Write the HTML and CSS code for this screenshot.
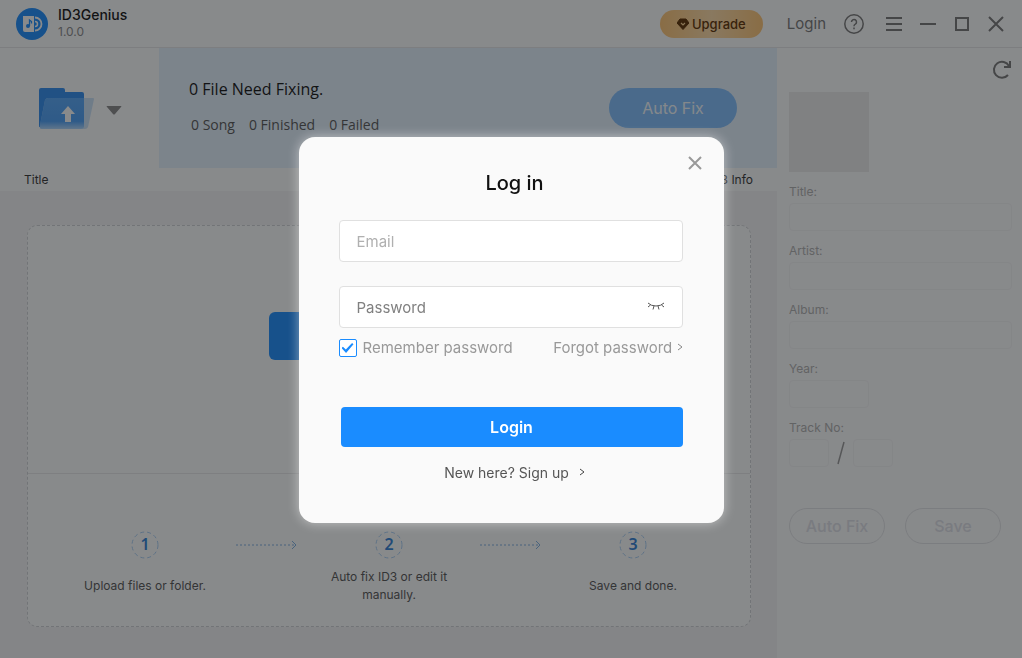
FILE: index.html
```html
<!DOCTYPE html>
<html lang="en">
	<head>
		<meta charset="utf-8">
		<title>ID3Genius</title>
		<link rel="stylesheet" href="styles.css">
	</head>
	<body>
		<div class="app">
			<header class="topbar">
				<svg class="logo" viewBox="0 0 32 32">
					<circle cx="16" cy="16" r="16" fill="#1a8cff"/>
					<path d="M7 8h11v16H9a2 2 0 0 1-2-2z" fill="#fff"/>
					<path d="M19 9.500a6.500 6.500 0 0 1 0 13" fill="none" stroke="#fff" stroke-width="1.800"/>
					<path d="M19 13.500a2.500 2.500 0 0 1 0 5" fill="none" stroke="#fff" stroke-width="1.500"/>
					<circle cx="12" cy="18" r="2" fill="#1a8cff"/>
					<path d="M13.500 18v-6l2 1.500v2" fill="none" stroke="#1a8cff" stroke-width="1.300"/>
				</svg>
				<div class="brand">
					<div class="name">ID3Genius</div>
					<div class="version">1.0.0</div>
				</div>
				<button class="upgrade" type="button">
					<svg width="12" height="12" viewBox="0 0 12 12"><path d="M3 1h6l3 4-6 6.500L0 5z" fill="#5c2f00" stroke="#5c2f00" stroke-linejoin="round"/><path d="M4 5l2 2 2-2" fill="none" stroke="#ffd593" stroke-width="1.200"/></svg>
					Upgrade
				</button>
				<a class="account" href="#">Login</a>
				<div class="tools">
					<button class="help" type="button" aria-label="Help"><svg width="20" height="20" viewBox="0 0 20 20"><circle cx="10" cy="10" r="9.200"/><path d="M7.500 8a2.500 2.500 0 1 1 3.800 2.100c-.9.500-1.300 1-1.300 2.100M10 13.600v1.600"/></svg></button>
					<button type="button" aria-label="Menu"><svg width="16" height="20" viewBox="0 0 16 20"><path d="M0 4h16M0 10h16M0 16h16"/></svg></button>
					<button type="button" aria-label="Minimize"><svg width="16" height="20" viewBox="0 0 16 20"><path d="M0 10h16"/></svg></button>
					<button type="button" aria-label="Maximize"><svg width="16" height="20" viewBox="0 0 16 20"><path d="M2 4h12v12H2z"/></svg></button>
					<button type="button" aria-label="Close"><svg width="16" height="20" viewBox="0 0 16 20"><path d="M1 3l14 14M15 3L1 17"/></svg></button>
				</div>
			</header>

			<div class="content">
				<main class="main">
					<div class="toolbar">
						<div class="add">
							<button type="button" aria-label="Add folder">
								<svg width="56" height="46" viewBox="0 0 56 46">
									<defs>
										<linearGradient id="front" x1="0" y1="0" x2="0" y2="1">
											<stop offset="0" stop-color="#56a8fb"/>
											<stop offset="0.750" stop-color="#4a9ff8"/>
											<stop offset="1" stop-color="#acd6ff"/>
										</linearGradient>
									</defs>
									<path d="M1 3q0-2 2-2h22q2 0 2 2v2h17q2 0 2 2v33H1z" fill="#2f8df0"/>
									<path d="M46 11h9q1 0 1 1l-6 28q-1 2-3 2H4q-3 0-2-4l5-25q1-2 3-2z" fill="#b4d6f7" opacity="0.700"/>
									<path d="M10 11h36v28q0 3-3 3H4q-3 0-2-4l5-25q1-2 3-2z" fill="url(#front)"/>
									<path d="M30 19l7 8h-4v8h-6v-8h-4z" fill="#fff"/>
								</svg>
							</button>
							<button type="button" aria-label="More"><svg width="16" height="9" viewBox="0 0 16 9"><path d="M1 0h14q1 0 0 1L9 8q-1 1-2 0L1 1q-1-1 0-1z" fill="#888"/></svg></button>
						</div>
						<div class="banner">
							<div class="summary">
								<div class="need">0 File Need Fixing.</div>
								<div class="counts"><span>0 Song</span><span>0 Finished</span><span>0 Failed</span></div>
							</div>
							<button class="autofix" type="button">Auto Fix</button>
						</div>
					</div>
					<div class="list-head"><span>Title</span><span>ID3 Info</span></div>
					<div class="drop">
						<div class="drop-top">
							<button class="pick" type="button" aria-label="Add files"></button>
						</div>
						<div class="steps">
							<div class="step"><svg width="30" height="30"><circle cx="15" cy="15" r="13"/><text x="15" y="20">1</text></svg><p>Upload files or folder.</p></div>
							<svg class="arrow" width="62" height="10" viewBox="0 0 62 10"><path class="dots" d="M0 5h58"/><path d="M56 1l4 4-4 4"/></svg>
							<div class="step"><svg width="30" height="30"><circle cx="15" cy="15" r="13"/><text x="15" y="20">2</text></svg><p>Auto fix ID3 or edit it manually.</p></div>
							<svg class="arrow" width="62" height="10" viewBox="0 0 62 10"><path class="dots" d="M0 5h58"/><path d="M56 1l4 4-4 4"/></svg>
							<div class="step"><svg width="30" height="30"><circle cx="15" cy="15" r="13"/><text x="15" y="20">3</text></svg><p>Save and done.</p></div>
						</div>
					</div>
				</main>

				<aside class="side">
					<button class="refresh" type="button" aria-label="Refresh"><svg width="20" height="20" viewBox="0 0 20 20"><path d="M16 15a8 8 0 1 1 1-9"/><path d="M18 1v6h-6"/></svg></button>
					<div class="cover"></div>
					<label for="title">Title:</label>
					<input id="title" type="text">
					<label for="artist">Artist:</label>
					<input id="artist" type="text">
					<label for="album">Album:</label>
					<input id="album" type="text">
					<label for="year">Year:</label>
					<input id="year" class="year" type="text">
					<label for="track">Track No:</label>
					<div class="track">
						<input id="track" type="text">
						<svg width="8" height="28" viewBox="0 0 8 28"><path d="M7 3L1 25" stroke="#999" stroke-width="1.500"/></svg>
						<input type="text" aria-label="Track total">
					</div>
					<div class="side-buttons">
						<button type="button">Auto Fix</button>
						<button type="button">Save</button>
					</div>
				</aside>
			</div>
		</div>

		<div class="mask">
			<form class="login" role="dialog" aria-labelledby="login-title">
				<button class="close" type="button" aria-label="Close"><svg width="14" height="14" viewBox="0 0 14 14"><path d="M1 1l12 12M13 1L1 13"/></svg></button>
				<h1 id="login-title">Log in</h1>
				<input class="field" type="email" placeholder="Email" aria-label="Email">
				<div class="password">
					<input class="field" type="password" placeholder="Password" aria-label="Password">
					<button class="eye" type="button" aria-label="Show password"><svg width="18" height="10" viewBox="0 0 18 10"><path d="M1 1q3 3 8 3t8-3M3.500 3L1 5M7 4L6 7.500M11 4l1 3.500M14.500 3L17 5"/></svg></button>
				</div>
				<div class="options">
					<label class="remember"><input type="checkbox" checked>Remember password</label>
					<a href="#">Forgot password <svg width="6" height="8" viewBox="0 0 6 8"><path d="M1 1l4 3-4 3"/></svg></a>
				</div>
				<button class="submit" type="submit">Login</button>
				<a class="signup" href="#">New here? Sign up <svg width="6" height="8" viewBox="0 0 6 8"><path d="M1 1l4 3-4 3"/></svg></a>
			</form>
		</div>
	</body>
</html>
```
FILE: styles.css
```css
* {
	box-sizing: border-box;
}

body {
	margin: 0;
	font-family: Inter, "Open Sans", sans-serif;
	font-size: 12px;
	color: #333;
}

button {
	font-family: inherit;
	border: 0;
	padding: 0;
	background: none;
	display: flex;
	align-items: center;
	justify-content: center;
}

input {
	font-family: inherit;
}

a {
	text-decoration: none;
}

.app {
	min-height: 100vh;
	display: flex;
	flex-direction: column;
	background: #fdfeff;
}

/* top bar */
.topbar {
	display: flex;
	align-items: center;
	height: 48px;
	padding: 0 18px 0 16px;
	border-bottom: 1px solid #e6e7e8;
}

.logo {
	width: 32px;
	height: 32px;
	margin-right: 10px;
}

.brand {
	flex: 1;
}

.name {
	font-size: 14px;
	line-height: 16px;
	font-weight: 500;
	color: #111;
}

.version {
	line-height: 18px;
	color: #888;
}

.upgrade {
	width: 103px;
	height: 28px;
	gap: 3px;
	border-radius: 14px;
	background: linear-gradient(90deg, #ffc473, #ffdca8 50%, #ffc473);
	color: #5c2f00;
	font-size: 13px;
	font-weight: 500;
}

.account {
	margin: 0 18px 0 24px;
	font-size: 15px;
	color: #777;
}

.tools {
	display: flex;
	gap: 18px;
}

.tools svg,
.refresh svg {
	fill: none;
	stroke: #777;
	stroke-width: 2;
}

.help {
	margin-right: 4px;
}

.tools .help svg {
	stroke-width: 1.5;
}

.content {
	flex: 1;
	display: flex;
}

.main {
	flex: 1;
	display: flex;
	flex-direction: column;
	background: #f4f5f6;
}

.toolbar {
	display: flex;
	height: 120px;
}

.add {
	display: flex;
	align-items: center;
	justify-content: center;
	gap: 12px;
	width: 159px;
	padding-top: 4px;
	background: #fdfeff;
}

.banner {
	flex: 1;
	display: flex;
	align-items: center;
	justify-content: space-between;
	padding: 0 40px 0 30px;
	background: #e5f2ff;
	font-family: "Open Sans", sans-serif;
}

.summary {
	padding-bottom: 2px;
}

.need {
	font-size: 16px;
	line-height: 24px;
	margin-bottom: 12px;
	color: #111;
}

.counts {
	display: flex;
	gap: 14px;
	padding-left: 2px;
	font-size: 14px;
	line-height: 24px;
	color: #555;
}

.autofix {
	width: 128px;
	height: 40px;
	border-radius: 20px;
	background: #80bfff;
	color: #f5faff;
	font-family: Inter, sans-serif;
	font-size: 16px;
}

.list-head {
	display: flex;
	justify-content: space-between;
	padding: 0 24px;
	line-height: 23px;
	background: #fdfeff;
}

.drop {
	flex: 1;
	display: flex;
	flex-direction: column;
	margin: 34px 26px 31px 27px;
	border: 1px dashed #d0d3d6;
	border-radius: 10px;
	background: #fdfeff;
}

.drop-top {
	flex: 1;
	display: flex;
	justify-content: center;
	align-items: center;
	padding-bottom: 28px;
	border-bottom: 1px solid #e8e9ea;
}

.pick {
	width: 240px;
	height: 48px;
	border-radius: 6px;
	background: #1a8cff;
}

.steps {
	display: flex;
	justify-content: space-between;
	padding: 56px 43px 22px;
}

.step {
	width: 148px;
	display: flex;
	flex-direction: column;
	align-items: center;
}

.step p {
	display: flex;
	align-items: center;
	min-height: 36px;
	margin: 8px 0 0;
	line-height: 18px;
	text-align: center;
	color: #555;
}

.step circle {
	fill: none;
	stroke: #a8cff5;
	stroke-dasharray: 4 3;
}

.step text {
	font-family: "Noto Sans", sans-serif;
	font-size: 16px;
	font-weight: 600;
	text-anchor: middle;
	fill: #2f7fd6;
}

.arrow {
	margin-top: 10px;
	fill: none;
	stroke: #7fb0e2;
}

.dots {
	stroke-dasharray: 2 2;
}

/* tag editor */
.side {
	width: 245px;
	padding: 12px 10px 0 12px;
	display: flex;
	flex-direction: column;
	align-items: flex-start;
}

.refresh {
	align-self: flex-end;
}

.cover {
	width: 80px;
	height: 80px;
	margin: 12px 0 8px;
	background: #ececec;
}

.side label {
	line-height: 23px;
	color: #b0b0b0;
}

.side input {
	width: 100%;
	height: 28px;
	margin-bottom: 8px;
	border: 1px solid #f5f6f7;
	border-radius: 4px;
	background: #fdfeff;
}

.side .year {
	width: 80px;
}

.track {
	display: flex;
	gap: 8px;
}

.side .track input {
	width: 40px;
}

.side-buttons {
	display: flex;
	gap: 20px;
	margin-top: 33px;
}

.side-buttons button {
	width: 96px;
	height: 36px;
	border: 1px solid #e3e5e8;
	border-radius: 18px;
	color: #dfe1e8;
	font-size: 16px;
	font-weight: 500;
}

/* login dialog */
.mask {
	position: fixed;
	inset: 0;
	display: flex;
	align-items: center;
	justify-content: center;
	padding-top: 2px;
	background: rgba(20, 22, 24, 0.5);
}

.login {
	position: relative;
	display: flex;
	flex-direction: column;
	width: 425px;
	padding: 30px 41px 39px 40px;
	border-radius: 16px;
	background: #fafafa;
	box-shadow: 0 0 12px rgba(255, 255, 255, 0.5);
}

.close {
	position: absolute;
	top: 19px;
	right: 22px;
}

.close svg {
	stroke: #999;
	stroke-width: 2;
}

.login h1 {
	margin: 0 0 21px;
	padding-left: 8px;
	font-size: 20px;
	line-height: 32px;
	font-weight: 500;
	text-align: center;
	color: #111;
}

.field {
	width: 100%;
	height: 42px;
	padding: 0 17px;
	border: 1px solid #e0e0e0;
	border-radius: 4px;
	background: #fff;
	font-size: 15px;
}

.field::placeholder {
	color: #b0b0b0;
}

.password {
	position: relative;
	margin: 24px 0 9px;
}

.password .field {
	display: block;
}

.password .field::placeholder {
	color: #808080;
}

.eye {
	position: absolute;
	top: 16px;
	right: 18px;
}

.login svg {
	fill: none;
}

.eye svg {
	stroke: #555;
}

.options {
	display: flex;
	align-items: center;
	justify-content: space-between;
	margin-bottom: 48px;
	line-height: 22px;
	font-size: 15px;
}

.options a,
.remember {
	color: #999;
}

.options a svg {
	stroke: #888;
	vertical-align: 2px;
}

.remember {
	display: flex;
	align-items: center;
	gap: 6px;
}

.remember input {
	appearance: none;
	display: flex;
	align-items: center;
	justify-content: center;
	width: 18px;
	height: 18px;
	margin: 0;
	border: 1px solid #1a8cff;
	border-radius: 2px;
	background: #fff;
}

.remember input:checked::before {
	content: "";
	width: 12px;
	height: 10px;
	background: #1a8cff;
	clip-path: polygon(0 50%, 12% 38%, 36% 66%, 88% 0, 100% 12%, 38% 100%);
}

.submit {
	height: 40px;
	margin-left: 2px;
	border-radius: 4px;
	background: #1a8cff;
	color: #fff;
	font-size: 16px;
	font-weight: 600;
}

.signup {
	margin-top: 15px;
	padding-left: 8px;
	text-align: center;
	line-height: 22px;
	font-size: 14px;
	color: #555;
}

.signup svg {
	margin-left: 6px;
	stroke: #444;
	vertical-align: 2px;
}
```
